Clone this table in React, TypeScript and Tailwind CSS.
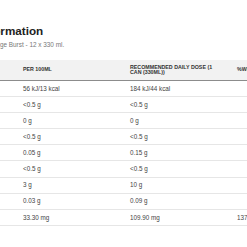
import React from "react";

const rows: [string, string, string, string][] = [
  ["Energy", "56 kJ/13 kcal", "184 kJ/44 kcal", ""],
  ["Fat", "<0.5 g", "<0.5 g", ""],
  ["of which saturates", "0 g", "0 g", ""],
  ["Carbohydrate", "<0.5 g", "<0.5 g", ""],
  ["of which sugars", "0.05 g", "0.15 g", ""],
  ["Fibre", "<0.5 g", "<0.5 g", ""],
  ["Protein", "3 g", "10 g", ""],
  ["Salt", "0.03 g", "0.09 g", ""],
  ["Vitamin C", "33.30 mg", "109.90 mg", "137%"],
];

export default function App() {
  return (
    <div
      className="w-[247px] h-[247px] overflow-hidden bg-white"
      style={{ fontFamily: '"Liberation Sans", Arial, sans-serif' }}
    >
      <div className="ml-[-73px] w-[420px] pt-[24px]">
        <h2 className="text-[11.7px] leading-[14px] font-bold text-[#222] whitespace-nowrap">
          Nutrition Information
        </h2>
        <p className="ml-[20px] mt-[3px] text-[6.4px] leading-[8px] text-[#777] whitespace-nowrap">
          Energy Drink Orange Burst - 12 x 330 ml.
        </p>
        <div className="mt-[11px]">
          <div className="flex h-[21px] items-center bg-[#f2f2f2] border-b-[1.5px] border-[#8c8c8c] text-[5.3px] leading-[5.3px] font-bold text-[#333] uppercase">
            <div className="w-[89px] shrink-0 pl-[7px]">Nutrient</div>
            <div className="w-[107px] shrink-0 pl-[7px]">Per 100ml</div>
            <div className="w-[107px] shrink-0 pl-[7px] pr-[12px]">
              Recommended daily dose (1 can (330ml))
            </div>
            <div className="w-[110px] shrink-0 pl-[7px]">%WDA*</div>
          </div>
          {rows.map((r, i) => (
            <div
              key={i}
              className="flex h-[16.1px] items-center border-b border-[#e6e6e6] text-[6.3px] text-[#444] whitespace-nowrap"
            >
              <div className="w-[89px] shrink-0 pl-[7px]">{r[0]}</div>
              <div className="w-[107px] shrink-0 pl-[7px]">{r[1]}</div>
              <div className="w-[107px] shrink-0 pl-[7px]">{r[2]}</div>
              <div className="w-[110px] shrink-0 pl-[7px]">{r[3]}</div>
            </div>
          ))}
        </div>
      </div>
    </div>
  );
}
